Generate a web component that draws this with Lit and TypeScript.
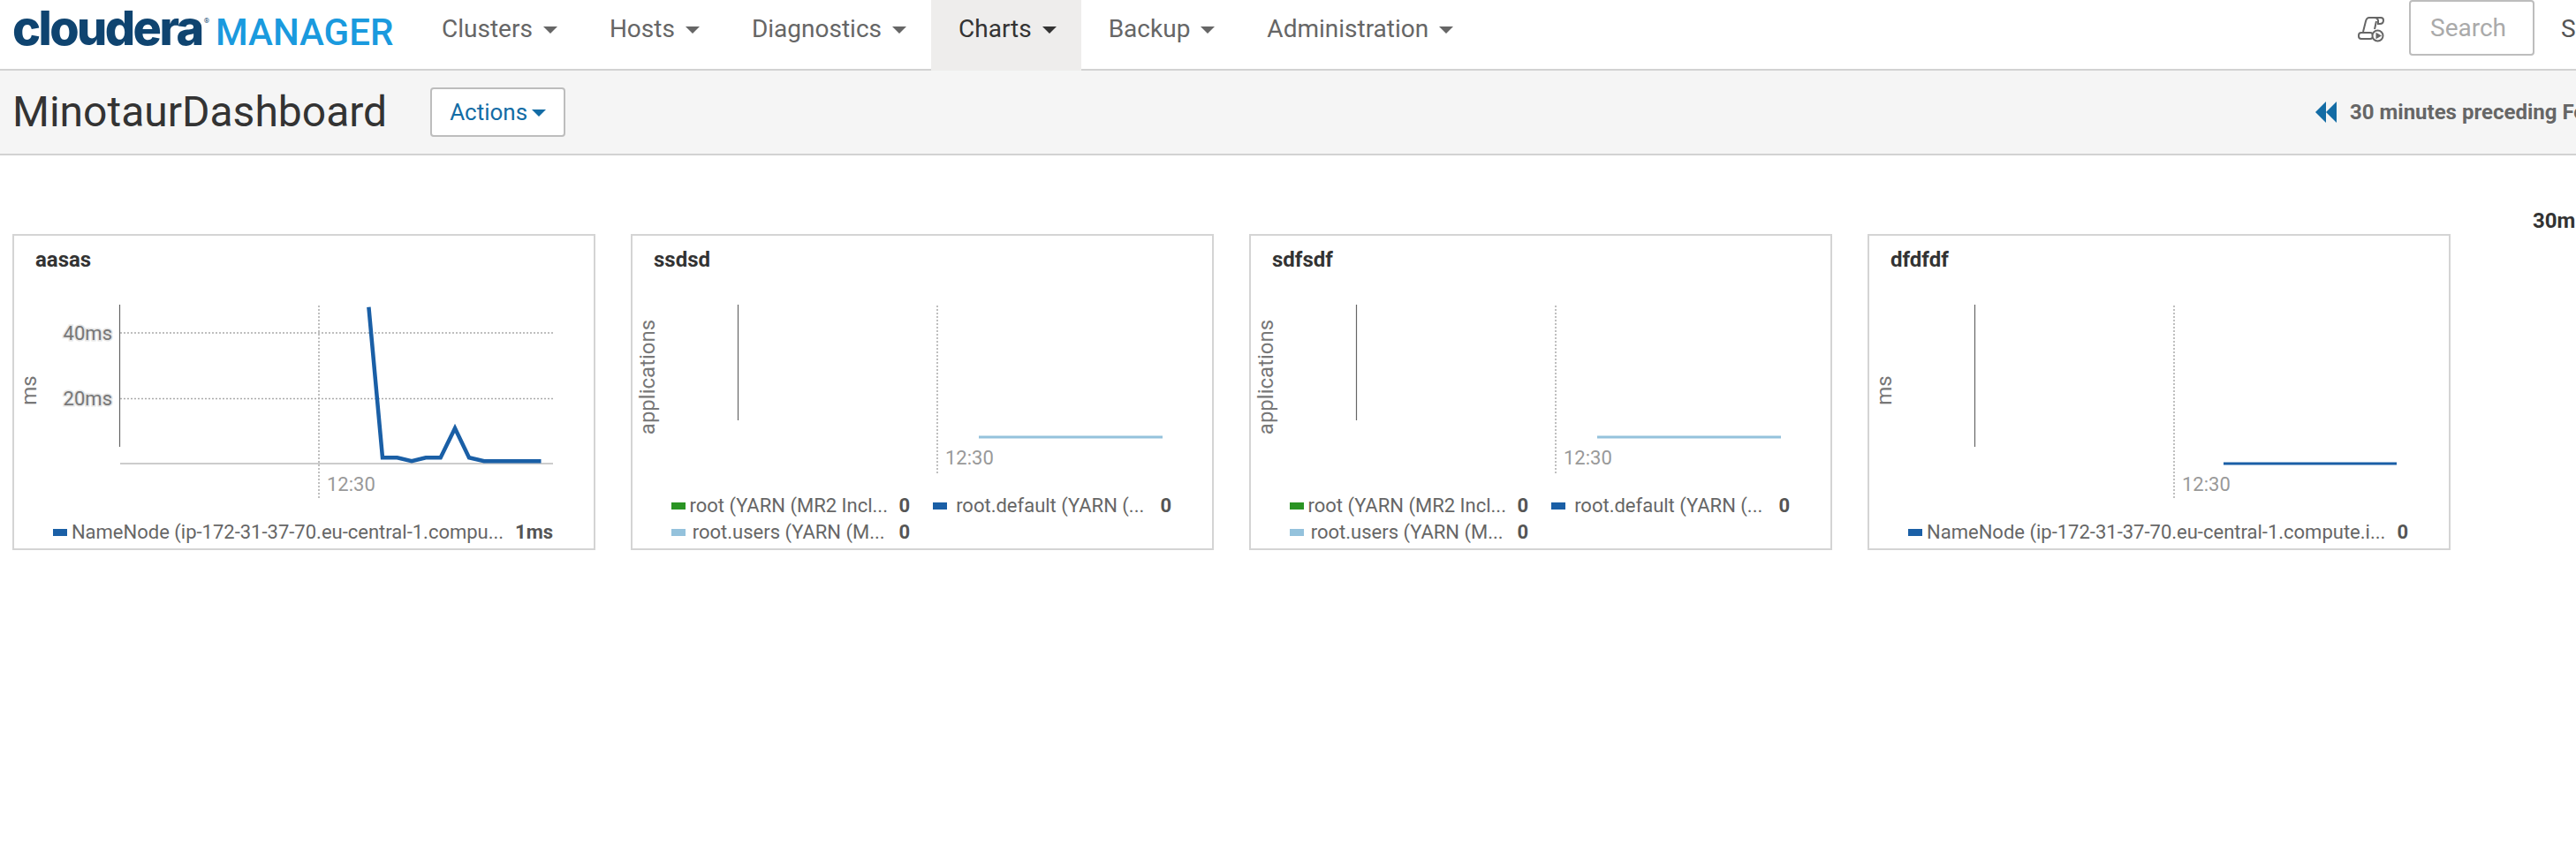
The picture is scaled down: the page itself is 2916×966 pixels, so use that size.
import { LitElement, css, html, svg } from 'lit';
import { customElement } from 'lit/decorators.js';

interface LegendItem {
  color: string;
  name: string;
  value: string;
  wide?: boolean;
}

interface Chart {
  title: string;
  unit: string;
  axisEnd: number;
  guideEnd: number;
  tickY: number;
  grid?: boolean;
  line: string;
  lineColor: string;
  lineWidth: number;
  legend: LegendItem[];
}

const BLUE = '#1a5fa6';
const GREEN = '#2a9423';
const PALE = '#94c2dc';

const yarnLegend: LegendItem[] = [
  { color: GREEN, name: 'root (YARN (MR2 Incl...', value: '0' },
  { color: BLUE, name: 'root.default (YARN (...', value: '0' },
  { color: PALE, name: 'root.users (YARN (M...', value: '0' },
];

const charts: Chart[] = [
  {
    title: 'aasas',
    unit: 'ms',
    axisEnd: 176,
    guideEnd: 235,
    tickY: 226,
    grid: true,
    line: '401.4,17.7 417,188.3 433.6,188.3 450,192.3 466,188.3 482.7,188.3 499,155 515,188.3 532,192.3 596.5,192.3',
    lineColor: BLUE,
    lineWidth: 4.5,
    legend: [{ color: BLUE, name: 'NameNode (ip-172-31-37-70.eu-central-1.compu...', value: '1ms', wide: true }],
  },
  {
    title: 'ssdsd',
    unit: 'applications',
    axisEnd: 146,
    guideEnd: 206,
    tickY: 196,
    line: '392,165 600,165',
    lineColor: PALE,
    lineWidth: 3,
    legend: yarnLegend,
  },
  {
    title: 'sdfsdf',
    unit: 'applications',
    axisEnd: 146,
    guideEnd: 206,
    tickY: 196,
    line: '392,165 600,165',
    lineColor: PALE,
    lineWidth: 3,
    legend: yarnLegend,
  },
  {
    title: 'dfdfdf',
    unit: 'ms',
    axisEnd: 176,
    guideEnd: 235,
    tickY: 226,
    line: '401,195 597,195',
    lineColor: BLUE,
    lineWidth: 3,
    legend: [{ color: BLUE, name: 'NameNode (ip-172-31-37-70.eu-central-1.compute.i...', value: '0', wide: true }],
  },
];

@customElement('chart-card')
export class ChartCard extends LitElement {
  static properties = {
    chart: { attribute: false },
  };

  static styles = css`
    :host {
      display: flex;
      flex-direction: column;
      box-sizing: border-box;
      width: 660px;
      height: 358px;
      border: 2px solid #d4d4d4;
      background: #fff;
    }

    .title {
      padding: 12px 0 0 24px;
      font-size: 24px;
      line-height: 30px;
      font-weight: 700;
      color: #333;
    }

    svg {
      display: block;
      flex: none;
      margin-top: 21px;
      font-family: Roboto, sans-serif;
    }

    .unit {
      font-size: 24px;
      fill: #777;
    }

    .ylabel {
      font-size: 22px;
      fill: #777;
      stroke: #e6e6e6;
      stroke-width: 3px;
      paint-order: stroke;
    }

    .tick {
      font-size: 22px;
      fill: #999;
    }

    .legend {
      display: grid;
      grid-template-columns: 270px 270px;
      column-gap: 26px;
      margin-top: auto;
      padding: 0 0 3px 44px;
      font-size: 22px;
      line-height: 30px;
      color: #666;
    }

    .item {
      display: flex;
      align-items: center;
    }

    .wide {
      grid-column: 1 / 3;
    }

    .swatch {
      flex: none;
      width: 16px;
      height: 8px;
    }

    .name {
      flex: 1;
      text-align: center;
      white-space: nowrap;
    }

    .value {
      margin-left: 8px;
      font-weight: 700;
      color: #555;
    }
  `;

  declare chart: Chart;

  override render() {
    const c = this.chart;
    const unitY = c.unit === 'ms' ? 112 : 97;
    const height = c.guideEnd + 5;
    return html`
      <div class="title">${c.title}</div>
      <svg width="656" height=${height} viewBox="0 0 656 ${height}">
        <line x1="119.5" y1="15" x2="119.5" y2=${c.axisEnd} stroke="#666" stroke-width="1.2" />
        <line x1="345" y1="16" x2="345" y2=${c.guideEnd} stroke="#aaa" stroke-width="1.5" stroke-dasharray="2 2" />
        ${c.grid
          ? svg`
              <line x1="120" y1="47" x2="610" y2="47" stroke="#aaa" stroke-width="1.5" stroke-dasharray="2 2" />
              <line x1="120" y1="121.5" x2="610" y2="121.5" stroke="#aaa" stroke-width="1.5" stroke-dasharray="2 2" />
              <line x1="120" y1="195" x2="610" y2="195" stroke="#bbb" stroke-width="1.5" />
              <text class="ylabel" x="111" y="55" text-anchor="end">40ms</text>
              <text class="ylabel" x="111" y="129" text-anchor="end">20ms</text>
            `
          : ''}
        <text class="unit" x="24.5" y=${unitY} text-anchor="middle" transform="rotate(-90 24.5 ${unitY})">${c.unit}</text>
        <text class="tick" x="354" y=${c.tickY}>12:30</text>
        <polyline points=${c.line} fill="none" stroke=${c.lineColor} stroke-width=${c.lineWidth} />
      </svg>
      <div class="legend">
        ${c.legend.map(
          (l) => html`
            <div class="item ${l.wide ? 'wide' : ''}">
              <span class="swatch" style="background:${l.color}"></span>
              <span class="name">${l.name}</span>
              <span class="value">${l.value}</span>
            </div>
          `
        )}
      </div>
    `;
  }
}

const NAV = ['Clusters', 'Hosts', 'Diagnostics', 'Charts', 'Backup', 'Administration'];

@customElement('app-root')
export class AppRoot extends LitElement {
  static styles = css`
    :host {
      display: block;
      width: 2916px;
      height: 966px;
      overflow: hidden;
      background: #fff;
      font-family: Roboto, sans-serif;
    }

    .nav {
      display: flex;
      box-sizing: border-box;
      height: 80px;
      border-bottom: 2px solid #d2d2d2;
    }

    .logo {
      display: flex;
      align-items: baseline;
      width: 469px;
      flex: none;
      padding: 0 0 0 14px;
      box-sizing: border-box;
      line-height: 64px;
      white-space: nowrap;
    }

    .logo-mark {
      font-family: Inter, sans-serif;
      font-size: 54px;
      font-weight: 800;
      letter-spacing: -2.6px;
      color: #0f4470;
    }

    .logo-reg {
      font-size: 8px;
      color: #0f4470;
      align-self: flex-start;
      margin: 0 0 0 2px;
      position: relative;
      top: -8px;
    }

    .logo-product {
      margin-left: 7px;
      font-size: 42px;
      font-weight: 500;
      color: #1a9ade;
    }

    .menu {
      display: flex;
      margin-bottom: -2px;
    }

    .menu-item {
      display: flex;
      align-items: flex-start;
      gap: 12px;
      padding: 16px 28px 0 31px;
      font-size: 28px;
      line-height: 33px;
      color: #666;
    }

    .menu-item.active {
      background: #eeedec;
      color: #333;
    }

    .caret {
      width: 0;
      height: 0;
      margin-top: 14px;
      border-left: 8px solid transparent;
      border-right: 8px solid transparent;
      border-top: 8px solid currentColor;
    }

    .nav-right {
      display: flex;
      align-items: flex-start;
      margin-left: auto;
      flex: none;
      width: 247px;
    }

    .scroll {
      display: block;
      margin: 18px 28px 0 0;
    }

    .search {
      box-sizing: border-box;
      width: 142px;
      height: 63px;
      margin: 0 30px 0 0;
      padding: 13px 0 0 22px;
      border: 2px solid #bdbdbd;
      border-radius: 4px;
      font-size: 28px;
      line-height: 33px;
      color: #aaa;
    }

    .user {
      font-size: 28px;
      line-height: 33px;
      padding-top: 16px;
      color: #555;
    }

    .subhead {
      display: flex;
      align-items: center;
      box-sizing: border-box;
      height: 96px;
      padding-left: 14px;
      border-bottom: 2px solid #d2d2d2;
      background: #f5f5f5;
    }

    h1 {
      margin: 0;
      font-size: 48px;
      font-weight: 400;
      line-height: 56px;
      color: #333;
    }

    .actions {
      display: flex;
      align-items: center;
      justify-content: center;
      gap: 5px;
      box-sizing: border-box;
      width: 153px;
      height: 56px;
      margin-left: 49px;
      border: 2px solid #bdbdbd;
      border-radius: 4px;
      background: #fff;
      font-size: 26px;
      color: #136ca5;
    }

    .actions .caret {
      margin-top: 2px;
    }

    .range {
      display: flex;
      align-items: center;
      gap: 15px;
      flex: none;
      width: 295px;
      margin-left: auto;
      white-space: nowrap;
      font-size: 24px;
      font-weight: 700;
      color: #666;
    }

    .range svg {
      flex: none;
    }

    .window {
      height: 89px;
      padding: 59px 0 0 2867px;
      box-sizing: border-box;
      font-size: 24px;
      font-weight: 700;
      line-height: 30px;
      color: #333;
    }

    .cards {
      display: flex;
      gap: 40px;
      padding-left: 14px;
    }
  `;

  override render() {
    return html`
      <div class="nav">
        <div class="logo">
          <span class="logo-mark">cloudera</span><span class="logo-reg">®</span>
          <span class="logo-product">MANAGER</span>
        </div>
        <div class="menu">
          ${NAV.map(
            (n) => html`<div class="menu-item ${n === 'Charts' ? 'active' : ''}">${n}<span class="caret"></span></div>`
          )}
        </div>
        <div class="nav-right">
          <svg class="scroll" width="30" height="30" viewBox="0 0 30 30" fill="none" stroke="#666" stroke-width="2">
            <rect x="1" y="19" width="16" height="7" rx="3" />
            <path d="M6 18 L9 6 Q10 2 13 2 L26 2 Q29 2 29 5 Q29 9 25 9 L23 9 L23 5 Q22 2 19 2" />
            <path d="M21 6 L19 15" />
            <circle cx="22.5" cy="22.5" r="6" fill="#fff" />
            <path d="M20.5 18.8 L27 22.5 L20.5 26.2 Z" fill="#666" stroke="none" />
          </svg>
          <div class="search">Search</div>
          <div class="user">S</div>
        </div>
      </div>
      <div class="subhead">
        <h1>MinotaurDashboard</h1>
        <div class="actions">Actions<span class="caret"></span></div>
        <div class="range">
          <svg width="24" height="24" viewBox="0 0 24 24" fill="#136ca5">
            <path d="M12 0 V24 L0 12 Z" />
            <path d="M24 0 V24 L12 12 Z" />
          </svg>
          <span>30 minutes preceding Fe</span>
        </div>
      </div>
      <div class="window">30m</div>
      <div class="cards">
        ${charts.map((c) => html`<chart-card .chart=${c}></chart-card>`)}
      </div>
    `;
  }
}
